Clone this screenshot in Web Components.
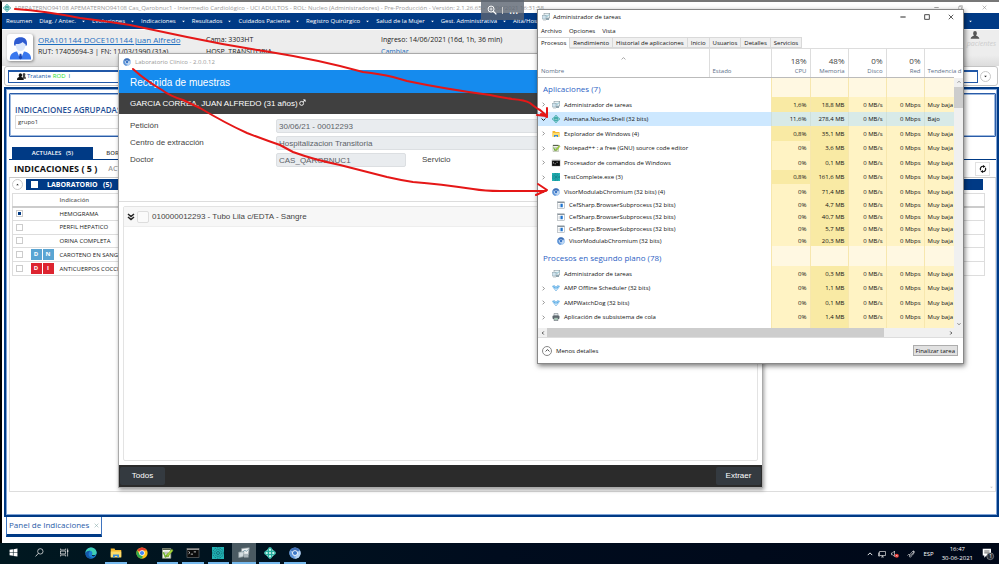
<!DOCTYPE html>
<html lang="es">
<head>
<meta charset="utf-8">
<title>Panel de Indicaciones</title>
<style>
html,body{margin:0;height:100%;overflow:hidden;background:#fff}
body{font:6px/8px "Open Sans","Noto Sans",sans-serif;color:#222}
</style>
</head>
<body>
<desktop-screen>
  <clinic-app slot="app"></clinic-app>
  <lab-window slot="windows"></lab-window>
  <zoom-pill slot="windows"></zoom-pill>
  <task-manager slot="windows"></task-manager>
  <red-arrows slot="windows"></red-arrows>
  <task-bar slot="bar"></task-bar>
</desktop-screen>
<script>
const BASE = `:host,*{box-sizing:border-box}button{font:inherit;color:inherit;background:none;border:0;padding:0;margin:0;display:inline-flex;align-items:center;white-space:nowrap}input{font:inherit;margin:0}`;
const define = (name, css, html) => customElements.define(name, class extends HTMLElement {
  constructor() {
    super();
    const root = this.attachShadow({mode: 'open'});
    root.innerHTML = `<style>${BASE}${css}</style>` + (typeof html === 'function' ? html() : html);
  }
});

const clover = c => `<g fill="none" stroke="${c}" stroke-width="1.6"><circle cx="8" cy="3.6" r="2.4"/><circle cx="8" cy="12.4" r="2.4"/><circle cx="3.6" cy="8" r="2.4"/><circle cx="12.4" cy="8" r="2.4"/></g><path d="M5 5l6 6M11 5l-6 6" stroke="${c}" stroke-width="2.4"/><circle cx="8" cy="8" r="1.2" fill="#fff"/>`;
const ICONS = {
  clover: clover('#1f9c93'),
  cloverBright: `<path d="M8 0L16 8 8 16 0 8z" fill="#bff3ea"/>${clover('#21a99a')}`,
  chromium: `<circle cx="8" cy="8" r="7.5" fill="#8db7e8"/><path d="M8 8L1.5 4.3A7.5 7.5 0 0 1 14.5 4.3z" fill="#3f6fb5"/><path d="M8 15.5A7.5 7.5 0 0 1 1.5 4.3L5 10z" fill="#5f94d6"/><path d="M14.6 4.5A7.5 7.5 0 0 1 8 15.5L11 9z" fill="#b5d3f3"/><circle cx="8" cy="8" r="3.7" fill="#fff"/><circle cx="8" cy="8" r="2.8" fill="#3c78c8"/>`,
  chrome: `<circle cx="8" cy="8" r="7.5" fill="#fbc116"/><path d="M8 8L1.5 4.3A7.5 7.5 0 0 1 14.6 4.5H8z" fill="#e33b2e"/><path d="M8 15.5A7.5 7.5 0 0 1 1.5 4.3L5 10l4 2z" fill="#2da94f"/><circle cx="8" cy="8" r="3.6" fill="#fff"/><circle cx="8" cy="8" r="2.8" fill="#4285f4"/>`,
  taskmgr: `<rect x="4" y="1" width="11.5" height="9" fill="#e9f2f5" stroke="#7b8b93"/><path d="M5 8l3-3 2 2 4-4" fill="none" stroke="#2d8fa8" stroke-width="1.2"/><rect x="1" y="5" width="7" height="7" fill="#cfe3ee" stroke="#8aa0ab"/><rect x="8" y="10" width="6" height="4" fill="#8fa4ae"/><path d="M2 14h6" stroke="#7b8b93"/>`,
  taskmgrTile: `<path d="M5 2l10-1-1 9-10 1z" fill="#eef1f2" stroke="#8d999e"/><path d="M1 7l7-1-1 7-6 1z" fill="#d3dcdf" stroke="#929da2"/><path d="M8 9h6v5H8z" fill="#a9b4b9"/><path d="M6 7l3-3 2 2 3-3" fill="none" stroke="#5f8a99"/>`,
  folder: `<path d="M1 2h5l1 2h8v9H1z" fill="#f5b82e"/><path d="M1 6h14v8H1z" fill="#fddc6b"/><path d="M4 10h8v4H9.6v-2H6.4v2H4z" fill="#3a8dde"/>`,
  notepad: `<path d="M2 2h11v13H2z" fill="#f4f6ec" stroke="#99a38b"/><path d="M2 2h11v2H2z" fill="#555f4d"/><path d="M4 7h6M4 9h5M4 13h6" stroke="#9a9a9a"/><path d="M3 7l3 6 3-3 1 3" fill="none" stroke="#6cb52d" stroke-width="2"/><path d="M14.6 2.5L8 10l-1 3 3-1 6-7z" fill="#a6d53a" stroke="#58821b" stroke-width=".6"/>`,
  cmd: `<rect x="0" y="2" width="16" height="12" fill="#0b0b0b" stroke="#777" stroke-width=".8"/><path d="M0 3h16" stroke="#bbb" stroke-width="1.4"/><path d="M2 6l2 1.5L2 9M5 9.5h3M9 6.5h3" stroke="#eee" fill="none"/>`,
  test: `<rect width="16" height="16" fill="#22b3b4"/><g fill="none" stroke="#0a4f60" stroke-width=".9"><circle cx="8" cy="8" r="2"/><circle cx="8" cy="8" r="4.5" stroke-dasharray="2 1"/><circle cx="8" cy="8" r="7" stroke-dasharray="2 1.4"/></g>`,
  exe: `<rect x="1" y="1.5" width="14" height="13" fill="#fff" stroke="#8a949c"/><path d="M1 3h14" stroke="#8a949c" stroke-width="2"/><rect x="3" y="6" width="4" height="6.5" fill="#d7dde2"/><rect x="7" y="5.5" width="4.5" height="7" fill="#1f74d0"/>`,
  amp: `<path d="M1 4l4-1 3 3 3-3 4 1-2 4-5 6-5-6z" fill="#d9eefc" stroke="#4a9bd8"/><path d="M1 4l5 1 2 3 2-3 5-1-4 5H5z" fill="#5fb0e8"/>`,
  printer: `<path d="M4 1h8v5H4z" fill="#dfe5e8" stroke="#6d777d"/><rect x="1" y="5" width="14" height="7" rx="2" fill="#5e686e"/><path d="M4 9h8v6H4z" fill="#cbd3d7" stroke="#4b555a"/><path d="M5 12h6" stroke="#37a24c"/>`,
  box: `<rect x="1" y="2" width="14" height="13" fill="#fff" stroke="#777"/>`,
  chev: `<path d="M5 2l6 6-6 6" fill="none" stroke="#666" stroke-width="2.2"/>`,
  chevDown: `<path d="M2 5l6 6 6-6" fill="none" stroke="currentColor" stroke-width="3"/>`,
  chevUp: `<path d="M2 11l6-6 6 6" fill="none" stroke="currentColor" stroke-width="2.4"/>`,
  caret: `<path d="M1 4h14l-7 8z" fill="currentColor"/>`,
  caretUp: `<path d="M1 12h14l-7-8z" fill="currentColor"/>`,
  dblDown: `<path d="M2 2l6 5 6-5M2 8l6 5 6-5" fill="none" stroke="#222" stroke-width="3"/>`,
  min: `<path d="M1 8h14" stroke="currentColor" stroke-width="2.4"/>`,
  max: `<rect x="2" y="2" width="12" height="12" fill="none" stroke="currentColor" stroke-width="2"/>`,
  restore: `<path d="M2 5h9v9H2zM5 5V2h9v9h-3" fill="none" stroke="currentColor" stroke-width="1.6"/>`,
  close: `<path d="M2 2l12 12M14 2L2 14" stroke="currentColor" stroke-width="1.8"/>`,
  user: `<path d="M5 5a3 3.4 0 0 1 6 0c0 2-1 3.4-1.5 4 2.5.7 5 1.5 5.5 5H1c.3-3.5 3-4.3 5.5-5C6 8.4 5 7 5 5z" fill="currentColor"/>`,
  users: `<path d="M10 4.5a2.5 2.7 0 0 1 5 0c0 1.5-.8 2.5-1.2 3 1 .5 2.2 1.5 2.2 4.5h-5z" fill="#444"/><path d="M3 5.5a3 3.2 0 0 1 6 0c0 1.8-.9 3-1.4 3.5C10 9.7 12 10.5 12 14H0c0-3.5 2-4.3 4.4-5C3.9 8.5 3 7.3 3 5.5z" fill="#111"/>`,
  male: `<circle cx="6" cy="10" r="4.5" fill="none" stroke="currentColor" stroke-width="2"/><path d="M9.5 6.5L14 2M9.5 2H14v4.5" fill="none" stroke="currentColor" stroke-width="2"/>`,
  refresh: `<path d="M3.2 10.5A5.5 5.5 0 0 1 9 2.6M12.8 5.5A5.5 5.5 0 0 1 7 13.4" fill="none" stroke="#111" stroke-width="2.4"/><path d="M8 0l5 3-5 3zM8 16l-5-3 5-3z" fill="#111"/>`,
  avatar: `<path d="M3.6 6.2C3 2.4 5 .6 8 .6s5 1.8 4.4 5.6z" fill="#2d5bd0"/><path d="M4.6 5.2c2 .2 4-.4 5-1.4.6.8 1.2 1.2 1.9 1.4 0 3-1.5 5-3.5 5s-3.4-2-3.4-5z" fill="#dce8fb"/><path d="M.6 16c0-4 2-5 5-5.6L8 13l2.4-2.6c3 .6 5 1.6 5 5.6z" fill="#3a78ee"/><path d="M5.6 10.4L8 16l2.4-5.6L8 12z" fill="#fff"/><path d="M7.4 12h1.2l.6 3L8 16l-1.2-1z" fill="#1c48b4"/>`,
  win: `<path d="M1 3l6-.9v5.4H1zM8 2l7-1v6.5H8zM1 8.5h6v5.4L1 13zM8 8.5h7V15l-7-1z" fill="#fff"/>`,
  search: `<circle cx="9.5" cy="6" r="4.8" fill="none" stroke="#eee" stroke-width="1.3"/><path d="M6 9.5L1 15" stroke="#eee" stroke-width="1.4"/>`,
  taskview: `<g fill="none" stroke="#ddd" stroke-width="1.3"><path d="M1 1v2.5h9V1M1 15v-2.5h9V15"/><rect x="1" y="5.5" width="9" height="5"/><path d="M13.5 1v14"/></g><rect x="12.3" y="4" width="2.5" height="3" fill="#ddd"/>`,
  edge: `<circle cx="8" cy="8" r="7.5" fill="#1b7fd3"/><path d="M.6 8A7.5 7.5 0 0 1 15.5 7c.3 3-2 4-4.5 4-1.4 0-2-.5-1.5-1.2C11 7 8 4.7 5.5 5.2 3 5.6 1 7 .6 8z" fill="#3fd0b4"/><path d="M5.5 7c-2 3 .5 7.5 5 7.6C6 16.5 1 14 .6 9.5 1 6 4 4.5 7 5.2 6.5 5.5 6 6 5.5 7z" fill="#1458a8"/><path d="M9.5 9.8c-.4.7.1 1.2 1.5 1.2 1 0 2-.1 3-.8L12.5 12c-2 .8-4-.2-3-2.2z" fill="#001018"/>`,
  monitor: `<path d="M3 3h12v8H3zM6 14h6M9 11v3M1 5v7h3" fill="none" stroke="#eee" stroke-width="1.3"/>`,
  speaker: `<path d="M1 6h2l4-4v11L3 9.5H1z" fill="none" stroke="#eee" stroke-width="1.3"/><circle cx="11.5" cy="11.5" r="4.2" fill="#e53935"/><path d="M10 10l3 3M13 10l-3 3" stroke="#fff"/>`,
  pen: `<path d="M1 11c3-4 5-2 4 1s3 3 5-1M5 10l7-8 2 2-7 8M12 2c3-1 3 2 2 4l-3 4" fill="none" stroke="#eee" stroke-width="1.3"/>`,
  note: `<path d="M1 1h11v9H6l-3 3v-3H1z" fill="#fff"/><path d="M3 4h7M3 6.5h7" stroke="#333"/><circle cx="11" cy="11" r="4.6" fill="#2a3038" stroke="#ccc" stroke-width=".6"/>`,
  magnify: `<circle cx="6.5" cy="6.5" r="4.8" fill="none" stroke="#fff" stroke-width="1.6"/><path d="M10 10l5 5" stroke="#fff" stroke-width="2"/><path d="M4 6.5h5M6.5 4v5" stroke="#fff" stroke-width="1.2"/>`
};
customElements.define('ui-icon', class extends HTMLElement {
  connectedCallback() {
    if (this.shadowRoot) return;
    this.attachShadow({mode: 'open'}).innerHTML = `<style>:host{display:inline-block;width:8px;height:8px;flex:none}svg{display:block;width:100%;height:100%;overflow:visible}</style><svg viewBox="0 0 16 16" aria-hidden="true">${ICONS[this.getAttribute('name')] || ''}</svg>`;
  }
});

define('desktop-screen', `
:host{display:grid;grid-template-rows:minmax(0,1fr) auto;height:100vh;position:relative;overflow:hidden}
`, `<slot name="app"></slot><slot name="bar"></slot><slot name="windows"></slot>`);

/* ---------- clinical application ---------- */
define('app-menu', `
:host{display:flex;align-items:center;height:16px;flex:none;background:#003a85;color:#fff;padding:0 4px;overflow:hidden;font-weight:500;font-size:6px}
button{margin-right:7px;gap:6px}
button:first-child{margin-right:8px}
ui-icon{width:3px;height:3px}
.end{margin-left:auto;margin-right:23px}
`, `<button>Resumen</button>` +
  ['Diag. / Antec.','Evoluciones','Indicaciones','Resultados','Cuidados Paciente','Registro Quirúrgico','Salud de la Mujer','Gest. Administrativa','Alta/Hosp.'].map(t => `<button>${t}<ui-icon name="caret"></ui-icon></button>`).join('') +
  `<button class="end" aria-label="Más"><ui-icon name="caret"></ui-icon></button>`);

define('patient-header', `
:host{display:grid;grid-template-columns:24px 175px 175px 1fr auto;align-items:start;height:36px;flex:none;margin-top:1px;padding:4px 3px 0 5px;background:linear-gradient(#ededed 70%,#dcdcdc);font-size:7px;line-height:12px;color:#222;white-space:nowrap;overflow:hidden}
.av{width:26px;height:27px;background:#fff;border-radius:3px;box-shadow:1px 1px 3px #888;display:grid;place-items:center}
.av ui-icon{width:23px;height:24px}
.who{padding-left:7px}
a{color:#1e6fc0}
.who a{font-size:8px;display:block}
p{margin:0}
.pac{text-align:right;color:#ccc;font-style:italic;font-size:7px;line-height:8px;margin-top:-4px}
.pac ui-icon{width:10px;height:10px;color:#555;display:block;margin:0 16px 0 auto}
`, `<div class="av"><ui-icon name="avatar"></ui-icon></div>
<div class="who"><a href="#">ORA101144 DOCE101144 Juan Alfredo</a><p>RUT: 17405694-3 | FN: 11/03/1990 (31a)</p></div>
<div><p>Cama: 3303HT</p><p>HOSP. TRANSITORIA</p></div>
<div><p>Ingreso: 14/06/2021 (16d, 1h, 36 min)</p><a href="#">Cambiar</a></div>
<div class="pac"><ui-icon name="user"></ui-icon>pacientes</div>`);

define('care-bar', `
:host{display:flex;align-items:center;gap:2px;height:20px;flex:none;margin:0 1px 0 2px;padding:1px 6px 0 3px;border:1px solid #c4c4c4;border-radius:3px;background:#fff}
.in{flex:1;display:flex;align-items:flex-start;height:13px;border:1px solid #2158a8;border-top-width:2px;padding-left:8px;color:#2158a8}
.in ui-icon{width:9px;height:9px;margin-right:1px}
b{color:#2be02b;font-weight:400;margin:0 3px 0 2px}
button{width:11px;height:11px;border:1px solid #c8c8c8;border-radius:50%;justify-content:center}
button ui-icon{width:3px;height:3px}
`, `<div class="in"><ui-icon name="users"></ui-icon>Tratante <b>ROD</b> I</div><button aria-label="Desplegar"><ui-icon name="caret"></ui-icon></button>`);

define('orders-panel', `
:host{display:flex;flex-direction:column;min-height:0;border:2px solid #003a85;outline:1px solid #7fa3d6;outline-offset:-3px;padding:4px 1px 23px 3px;background:#fff;margin:1px 0 0 2px}
fieldset{margin:0;border:1px solid #2a5ca8;outline:1px solid #9db9de;outline-offset:-2px;border-radius:1px;padding:11px 5px 4px;height:44px;flex:none;display:flex;flex-direction:column;justify-content:space-between}
label{color:#1f4f95;font-size:8px;font-weight:600;line-height:10px}
input.t{width:80%;height:14px;border:1px solid #ddd;background:#fff;padding:0 2px;color:#333;font-size:6px}
.tabs{display:flex;flex:none;margin:10px 0 0;padding-left:3px;border-bottom:1px solid #003a85;font-weight:600;color:#444}
.tabs button{height:12px;width:81px;justify-content:center;white-space:pre}
.tabs .on{background:#003a85;color:#fff}
.head{display:flex;flex:none;align-items:center;height:17px;padding:0 6px 0 5px;gap:11px;white-space:pre}
h2{margin:0;font-size:9px;line-height:12px;color:#111}
.head span{color:#999;font-size:7px;font-weight:600}
.head button{margin-left:auto;width:15px;height:14px;border:1px solid #e2e2e2;justify-content:center}
.scroll{flex:1;min-height:0;border:1px solid #ddd;border-top-color:#c8c8c8;padding:1px 10px 0 2px;display:flex;flex-direction:column}
.grp{display:flex;gap:3px;align-items:center}
.grp button{width:11px;height:11px;border:1px solid #ccc;border-radius:50%;justify-content:center}
.grp button ui-icon{width:3px;height:3px}
.bar{flex:1;display:flex;align-items:center;gap:9px;height:11px;padding-left:5px;background:#003a85;white-space:pre;margin-right:2px}
.bar label{color:#fff;font-weight:700;font-size:7px}
.bar input{appearance:none;width:7px;height:7px;background:#fff}
table{border-collapse:collapse;width:100%;height:83px;margin-top:3px;border:1px solid #ddd;table-layout:fixed}
tr{height:13px;border-bottom:1px solid #ddd}
thead tr{border-bottom:2px solid #ccc}
th,td{padding:0;text-align:left;font-weight:400;line-height:8px;white-space:nowrap}
th{font-weight:600;color:#666}
td input{appearance:none;width:7px;height:7px;border:1px solid #ccc;background:#fff;display:block;margin-left:3px}
td input:checked{background:#003a85;border:2px solid #fff;outline:1px solid #ccc;outline-offset:-1px}
.bd{display:flex;gap:1px}
i{width:11px;height:11px;text-align:center;color:#fff;font:700 6px/11px "Open Sans",sans-serif;background:#5aa5d3}
.r i{background:#dd2430}
.dn{align-self:flex-end;margin:auto -8px 2px 0;width:3px;height:3px;color:#ccc}
`, () => {
  const rows = [['HEMOGRAMA','','',1],['PERFIL HEPATICO'],['ORINA COMPLETA'],['CAROTENO EN SANGRE','DN','b'],['ANTICUERPOS COCCIDIOIDES','DI','r']];
  return `<fieldset><label for="g">INDICACIONES AGRUPADAS</label><input id="g" class="t" value="grupo1"></fieldset>
<div class="tabs"><button class="on">ACTUALES   (5)</button><button style="width:60px">BORRADOR</button></div>
<div class="head"><h2>INDICACIONES ( 5 )</h2><span>ACTIVAS</span><button aria-label="Actualizar"><ui-icon name="refresh"></ui-icon></button></div>
<div class="scroll"><div class="grp"><button aria-label="Plegar"><ui-icon name="caretUp"></ui-icon></button><div class="bar"><input type="checkbox" id="all"><label for="all">LABORATORIO   (5)</label></div></div>
<table><colgroup><col style="width:18px"><col style="width:29px"><col></colgroup><thead><tr><th></th><th></th><th>Indicación</th></tr></thead><tbody>${rows.map(([n,b='',c='',k]) =>
  `<tr><td><input type="checkbox" aria-label="${n}" ${k ? 'checked' : ''}></td><td class="${c}"><div class="bd">${[...b].map(x => `<i>${x}</i>`).join('')}</div></td><td>${n}</td></tr>`).join('')}</tbody></table>
<ui-icon class="dn" name="caret"></ui-icon></div>`;
});

define('clinic-app', `
:host{display:flex;flex-direction:column;min-height:0;border-left:2px solid #000;border-top:2px solid #777;background:#fff;padding-bottom:6px}
header{display:flex;flex:none;align-items:center;height:11px;padding:0 12px 0 1px;gap:3px;color:#999;font-size:6px;white-space:nowrap}
.ctl{margin-left:auto;display:flex;gap:19px;color:#888}
.ctl ui-icon{width:5px;height:5px}
orders-panel{flex:1}
.tab{align-self:flex-start;flex:none;display:flex;align-items:center;gap:5px;height:20px;margin-left:4px;padding:0 2px 1px;border:1px solid #3f74bf;border-top:0;border-bottom:3px solid #003a85;color:#2a5ca8;font-size:8px}
.tab ui-icon{width:5px;height:5px;color:#8aa}
`, `<header><ui-icon name="clover"></ui-icon><span>APEPATERNO94108 APEMATERNO94108 Cas_Qarobnuc1 - Intermedio Cardiológico - UCI ADULTOS - ROL: Nucleo (Administradores) - Pre-Producción - Versión: 2.1.26.65 - 30/06/2021 16:31:58</span>
<div class="ctl"><button aria-label="Minimizar"><ui-icon name="min"></ui-icon></button><button aria-label="Restaurar"><ui-icon name="restore"></ui-icon></button><button aria-label="Cerrar"><ui-icon name="close"></ui-icon></button></div></header>
<app-menu></app-menu><patient-header></patient-header><care-bar></care-bar><orders-panel></orders-panel>
<div class="tab"><button>Panel de Indicaciones</button><button aria-label="Cerrar panel"><ui-icon name="close"></ui-icon></button></div>`);

/* ---------- laboratory window ---------- */
define('lab-window', `
:host{position:absolute;left:119px;top:54px;width:643px;height:433px;display:flex;flex-direction:column;background:#fff;box-shadow:0 0 0 1px #aaa,1px 2px 4px 1px #0006;font:8px/10px "Liberation Sans",Arial,sans-serif;color:#444}
.t{display:flex;align-items:center;gap:4px;height:16px;padding:0 4px;color:#999;font:6px/8px "Open Sans",sans-serif}
h1{margin:0;height:23px;padding:0 11px;background:#158bee;color:#fff;font-size:10px;line-height:25px;font-weight:400}
h2{margin:0;height:21px;padding:0 11px;background:#404040;color:#fff;font-size:8px;line-height:21px;font-weight:400}
h2 ui-icon{width:7px;height:7px;margin-left:-1px}
.f{display:grid;grid-template-columns:146px 130px 16px 1fr;grid-auto-rows:14px;row-gap:3px;align-items:center;padding:5px 11px 34px;border-bottom:1px solid #ddd}
.f input{height:14px;min-width:0;border:1px solid #dcdfe2;border-radius:2px;background:#e9ecef;color:#5c6268;padding:0 2px}
.w{grid-column:2/5}
.s{grid-column:4}
.box{flex:1;margin:4px 4px 4px;border:1px solid #e3e3e3;border-radius:2px}
.r{display:flex;align-items:center;gap:3px;height:20px;padding-left:3px;background:#f7f7f7;border-bottom:1px solid #eee}
.r input{appearance:none;width:12px;height:12px;margin-left:-1px;border:1px solid #ddd;border-radius:2px;background:#fafafa}
footer{display:flex;justify-content:space-between;height:22px;padding:2px 1px;background:#2b2b2b;color:#fff}
footer button{width:45px;justify-content:center;background:#343a40;border-radius:2px}
`, `<div class="t"><ui-icon name="chromium"></ui-icon>Laboratorio Clínico - 2.0.0.12</div>
<h1>Recogida de muestras</h1><h2>GARCIA CORREA, JUAN ALFREDO (31 años) <ui-icon name="male"></ui-icon></h2>
<div class="f"><label for="p">Petición</label><input id="p" class="w" value="30/06/21 - 00012293" disabled><label for="c">Centro de extracción</label><input id="c" class="w" value="Hospitalizacion Transitoria" disabled><label for="d">Doctor</label><input id="d" value="CAS_QAROBNUC1" disabled><span class="s">Servicio</span></div>
<div class="box"><div class="r"><button aria-label="Expandir"><ui-icon name="dblDown"></ui-icon></button><input type="checkbox" id="t"><label for="t">010000012293 - Tubo Lila c/EDTA - Sangre</label></div></div>
<footer><button>Todos</button><button>Extraer</button></footer>`);

define('zoom-pill', `
:host{position:absolute;left:481px;top:0;width:43px;height:20px;display:flex;align-items:center;justify-content:space-evenly;background:#5b6470cc;color:#fff;font-size:12px}
ui-icon{width:10px;height:10px}
span{width:1px;height:7px;background:#ccc}
`, `<button aria-label="Ampliar"><ui-icon name="magnify"></ui-icon></button><span></span><button aria-label="Más opciones">…</button>`);

/* ---------- task manager ---------- */
define('process-table', `
:host{display:block;overflow-x:visible;overflow-y:clip}
table{border-collapse:collapse;table-layout:fixed;width:100%}
td,th{padding:0;font-weight:400;white-space:nowrap;overflow:hidden;line-height:8px}
th{height:28px;vertical-align:bottom;color:#5c6f88;border-right:1px solid #ddd;border-bottom:1px solid #bbb;padding:0 3px 2px;text-align:right}
th:first-child,th:nth-child(2),th:last-child{text-align:left}
th:first-child,th:nth-child(2){padding-left:3px}
th:last-child{border-right:0;overflow:visible}
th b{display:block;font-weight:400;font-size:8px;line-height:10px;color:#444;margin-bottom:1px}
th ui-icon{display:block;width:5px;height:5px;margin:0 auto 6px;color:#888}
td.n{text-align:right;padding-right:3px;background:#fff3c4;border-left:1px solid #f7e7ae}
td.h{background:#f9eaa4}
td.l{text-align:left;padding:0 0 0 3px}
.a td{height:14px}
tr.a:nth-child(even) td{height:15px}
.s td{height:12px}
tr.s:nth-child(12) td{height:11px}
.g td{height:20px;font-size:8px;color:#2d5fc4;padding:4px 0 0 5px}
.g td.n{background:#fff8e2}
.sel td{background:#cde8ff}
.sel td.n{background:#d8eae8;border-color:#cfe0da}
.c{display:flex;align-items:center;gap:4px;padding-left:3px}
.c>button,.c>u{width:7px;height:6px;text-decoration:none}
.c>button ui-icon{width:5px;height:5px}
.s .c{padding-left:8px}
`, () => {
  const m = 'Muy baja';
  const R = [
    ['g','Aplicaciones (7)'],
    ['a','Administrador de tareas','taskmgr','1,6%','18,8 MB',m,'>'],
    ['a sel','Alemana.Nucleo.Shell (32 bits)','clover','11,6%','278,4 MB','Bajo','v'],
    ['a','Explorador de Windows (4)','folder','0,8%','35,1 MB',m,'>'],
    ['a','Notepad++ : a free (GNU) source code editor','notepad','0%','3,6 MB',m,'>'],
    ['a','Procesador de comandos de Windows','cmd','0%','0,1 MB',m,'>'],
    ['a','TestComplete.exe (3)','test','0,8%','161,6 MB',m,'>'],
    ['a','VisorModulabChromium (32 bits) (4)','chromium','0%','71,4 MB',m,'v'],
    ['s','CefSharp.BrowserSubprocess (32 bits)','exe','0%','4,7 MB',m],
    ['s','CefSharp.BrowserSubprocess (32 bits)','exe','0%','40,7 MB',m],
    ['s','CefSharp.BrowserSubprocess (32 bits)','exe','0%','5,7 MB',m],
    ['s','VisorModulabChromium (32 bits)','chromium','0%','20,3 MB',m],
    ['g','Procesos en segundo plano (78)'],
    ['a','Administrador de tareas','taskmgr','0%','0,3 MB',m],
    ['a','AMP Offline Scheduler (32 bits)','amp','0%','1,1 MB',m,'>'],
    ['a','AMPWatchDog (32 bits)','amp','0%','0,1 MB',m,'>'],
    ['a','Aplicación de subsistema de cola','printer','0%','1,4 MB',m,'>'],
    ['a','','box','','','']
  ];
  const body = R.map(([k,n,ic,cpu,mem,tr,x]) => k === 'g'
    ? `<tr class="g"><td colspan="2">${n}</td>${'<td class="n"></td>'.repeat(5)}</tr>`
    : `<tr class="${k}"><td colspan="2"><div class="c">${x ? `<button aria-label="Expandir"><ui-icon name="${x === '>' ? 'chev' : 'chevDown'}"></ui-icon></button>` : '<u></u>'}<ui-icon name="${ic}"></ui-icon><span>${n}</span></div></td><td class="n ${/^[1-9]|0,/.test(cpu) ? 'h' : ''}">${cpu}</td><td class="n h">${mem}</td><td class="n">${cpu && '0 MB/s'}</td><td class="n">${cpu && '0 Mbps'}</td><td class="n l">${tr}</td></tr>`).join('');
  return `<table><colgroup><col><col style="width:62px"><col style="width:39px"><col style="width:38px"><col style="width:38px"><col style="width:38px"><col style="width:30px"></colgroup>
<thead><tr><th><ui-icon name="chevUp"></ui-icon>Nombre</th><th>Estado</th><th><b>18%</b>CPU</th><th><b>48%</b>Memoria</th><th><b>0%</b>Disco</th><th><b>0%</b>Red</th><th>Tendencia d</th></tr></thead><tbody>${body}</tbody></table>`;
});

define('task-manager', `
:host{position:absolute;left:537px;top:9px;width:427px;height:355px;display:flex;flex-direction:column;background:#fff;border:1px solid #888;box-shadow:1px 2px 5px #0008;color:#111}
.t{display:flex;align-items:center;gap:3px;height:14px;padding:0 9px 0 4px}
.ctl{margin-left:auto;display:flex;gap:18px}
.ctl ui-icon{width:6px;height:6px}
.m{display:flex;gap:7px;height:13px;padding:0 3px}
.tabs{display:flex;height:12px;border-bottom:1px solid #ddd}
.tabs button{padding:0 3px;background:#f0f0f0;border:1px solid #d9d9d9;border-left:0}
.tabs .on{background:#fff;border-bottom-color:#fff;height:12px}
.mid{flex:1;min-height:0;display:grid;grid-template-columns:minmax(0,1fr) 9px}
.mid process-table{min-height:0}
.sb{margin-top:29px;background:#f0f0f0;display:flex;flex-direction:column;align-items:center;justify-content:space-between;padding:2px 0 2px;color:#555}
.sb ui-icon,.hs ui-icon{width:4px;height:4px}
.sb span{width:100%;height:21px;background:#cdcdcd;margin:3px 0 auto}
.hs{height:10px;background:#f0f0f0;display:flex;align-items:center;padding:0 10px 0 3px;border-bottom:1px solid #ddd}
.hs span{width:337px;height:9px;background:#cdcdcd;margin:0 auto 0 2px}
.l{transform:rotate(90deg)}.rr{transform:rotate(-90deg)}
footer{display:flex;align-items:center;justify-content:space-between;height:25px;padding:0 5px 0 4px}
footer button{gap:4px}
footer .o{width:10px;height:10px;border:1px solid #888;border-radius:50%;display:grid;place-items:center}
.o ui-icon{width:5px;height:5px}
footer .fin{height:11px;padding:0 2px;border:1px solid #adadad;background:#e1e1e1}
`, `<div class="t"><ui-icon name="taskmgr"></ui-icon>Administrador de tareas<div class="ctl"><button aria-label="Minimizar"><ui-icon name="min"></ui-icon></button><button aria-label="Maximizar"><ui-icon name="max"></ui-icon></button><button aria-label="Cerrar"><ui-icon name="close"></ui-icon></button></div></div>
<div class="m"><button>Archivo</button><button>Opciones</button><button>Vista</button></div>
<div class="tabs"><button class="on">Procesos</button>${['Rendimiento','Historial de aplicaciones','Inicio','Usuarios','Detalles','Servicios'].map(t => `<button>${t}</button>`).join('')}</div>
<div class="mid"><process-table></process-table><div class="sb"><ui-icon name="chevUp"></ui-icon><span></span><ui-icon name="chevDown"></ui-icon></div></div>
<div class="hs"><ui-icon class="l" name="chevDown"></ui-icon><span></span><ui-icon class="rr" name="chevDown"></ui-icon></div>
<footer><button><span class="o"><ui-icon name="chevUp"></ui-icon></span>Menos detalles</button><button class="fin">Finalizar tarea</button></footer>`);

/* ---------- hand-drawn arrows ---------- */
define('red-arrows', `
:host{position:absolute;left:0;top:0;width:999px;height:564px;pointer-events:none}
svg{display:block;fill:none;stroke:#e51717;stroke-width:2;stroke-linecap:round;stroke-linejoin:round}
`, `<svg width="999" height="564" viewBox="0 0 999 564"><path d="M15 9Q45 11 80 18Q105 21 130 25L187 37Q230 46 270 52Q320 60 363 72Q380 74 393 77L407 81Q445 89 490 95Q505 98 512 99Q525 100 530 103Q536 108 540 110L547 116M541 114L547 117L547 108M537 115L546 116"/><path d="M133 69Q145 80 162 90Q170 96 183 100L200 108Q225 123 247 133Q265 140 280 145L293 152Q315 160 340 165L387 177Q400 180 413 182Q440 184 473 189Q485 191 500 191L546 191M538 184L547 190L536 195"/></svg>`);

/* ---------- taskbar ---------- */
define('task-bar', `
:host{display:flex;align-items:center;justify-content:space-between;height:21px;background:linear-gradient(90deg,#001820,#000c1e 50%,#000818);color:#fff;padding:0 5px 0 1px}
nav{display:grid;grid-template-columns:repeat(12,1fr);width:307px;height:21px}
nav button{justify-content:center;border-bottom:2px solid transparent;margin:0 2px}
nav ui-icon{width:12px;height:12px}
nav .sm ui-icon{width:9px;height:9px}
nav .run{border-bottom-color:#76b9ed}
nav .act{background:#4a5a62;margin:0 1px}
.tray{display:flex;align-items:center;gap:5px}
time{text-align:center;line-height:9px;margin:0 4px 0 3px}
.tray .n{width:12px;height:12px;position:relative}
.n ui-icon{width:12px;height:12px}
.n span{position:absolute;right:2px;bottom:0;font-size:5px;line-height:7px}
.tray .c{width:6px;height:6px}
.tray .p{margin:0 3px}
`, `<nav>${[['win','sm','Inicio'],['search','sm','Buscar'],['taskview','sm','Vista de tareas'],['edge','','Edge'],['folder','run','Explorador'],['chrome','','Chrome'],['notepad','run','Notepad++'],['cmd','run','Consola'],['test','run','TestComplete'],['taskmgrTile','run act','Administrador de tareas'],['cloverBright','run','Alemana'],['chromium','run','Visor']].map(([i,c,l]) => `<button class="${c}" aria-label="${l}"><ui-icon name="${i}"></ui-icon></button>`).join('')}</nav>
<div class="tray"><ui-icon class="c" name="chevUp"></ui-icon><ui-icon name="monitor"></ui-icon><ui-icon name="speaker"></ui-icon><ui-icon class="p" name="pen"></ui-icon><span>ESP</span><time>16:47<br>30-06-2021</time><button class="n" aria-label="Notificaciones"><ui-icon name="note"></ui-icon><span>1</span></button></div>`);
</script>
</body>
</html>
